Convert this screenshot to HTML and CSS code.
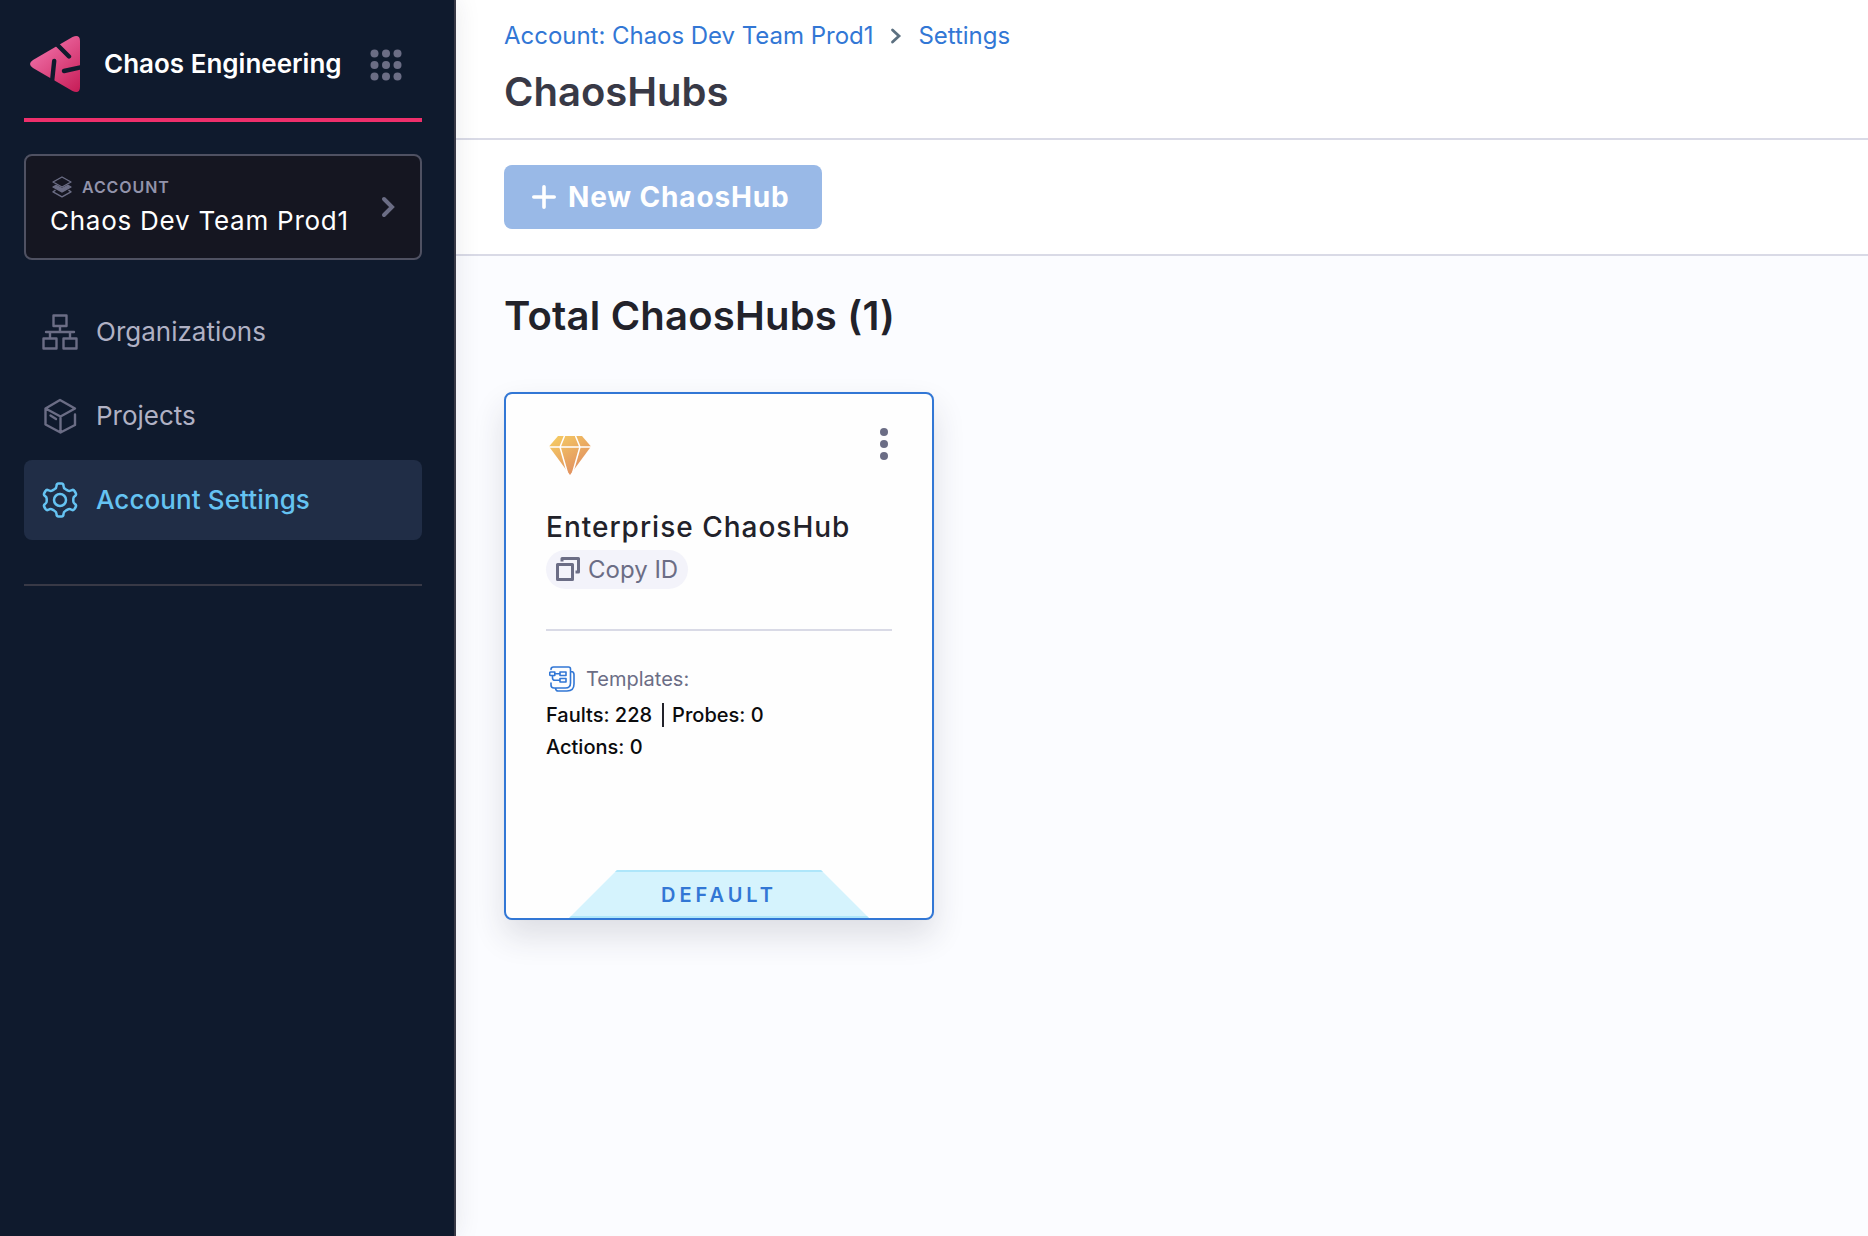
FILE: index.html
```html
<!DOCTYPE html>
<html lang="en">
<head>
<meta charset="utf-8">
<title>ChaosHubs</title>
<link rel="stylesheet" href="styles.css">
</head>
<body>
<div class="app">
  <aside class="sidebar">
    <div class="brand">
      <svg class="brand-logo" viewBox="0 0 50 56" width="50" height="56">
        <defs>
          <linearGradient id="pink" x1="0.2" y1="0.1" x2="0.9" y2="1">
            <stop offset="0" stop-color="#f070a8"/>
            <stop offset="1" stop-color="#c8205a"/>
          </linearGradient>
        </defs>
        <path fill="url(#pink)" d="M3 24 42.500.9Q50-2 50 5V51Q50 58 42.500 55.100L3 32Q-3 28 3 24Z"/>
        <path class="logo-cut" d="M39 20.500 27 8.500M24.200 25 22 46M34 35 52 31"/>
      </svg>
      <span class="brand-name">Chaos Engineering</span>
      <svg class="brand-grid" viewBox="0 0 32 32" width="32" height="32" fill="#6b6d85">
        <circle cx="4.500" cy="4.500" r="4"/><circle cx="16" cy="4.500" r="4"/><circle cx="27.500" cy="4.500" r="4"/>
        <circle cx="4.500" cy="16" r="4"/><circle cx="16" cy="16" r="4"/><circle cx="27.500" cy="16" r="4"/>
        <circle cx="4.500" cy="27.500" r="4"/><circle cx="16" cy="27.500" r="4"/><circle cx="27.500" cy="27.500" r="4"/>
      </svg>
    </div>
    <div class="scope">
      <div class="scope-text">
        <div class="scope-label">
          <svg viewBox="0 0 20 22" width="20" height="22" fill="none" stroke="#6b6d85" stroke-width="1.400" stroke-linejoin="round">
            <path d="M10 1 19 6 10 11 1 6Z"/>
            <path d="M1 11 4 9.300 10 12.600 16 9.300 19 11 10 16Z" fill="#6b6d85"/>
            <path d="M3.500 14.200 1 15.800 10 20.800 19 15.800 16.500 14.200"/>
          </svg>
          <span>ACCOUNT</span>
        </div>
        <div class="scope-name">Chaos Dev Team Prod1</div>
      </div>
      <svg class="scope-arrow" viewBox="0 0 14 22" width="14" height="22"><path d="M3 3 11 11 3 19" fill="none" stroke="#6b6d85" stroke-width="4" stroke-linecap="round"/></svg>
    </div>
    <nav class="nav">
      <a class="nav-item">
        <svg viewBox="0 0 36 36" width="36" height="36" fill="none" stroke="#6b6d85" stroke-width="2.400" stroke-linejoin="round" stroke-linecap="round">
          <path d="M11.500 1.500H24.500V12H11.500ZM1.500 24.500H14.500V34.500H1.500ZM21.500 24.500H34.500V34.500H21.500ZM18 12V18M4 18H32M8 18V24M28 18V24"/>
        </svg>
        <span>Organizations</span>
      </a>
      <a class="nav-item">
        <svg viewBox="0 0 36 36" width="36" height="36" fill="none" stroke="#6b6d85" stroke-width="2.400" stroke-linejoin="round" stroke-linecap="round">
          <path d="M33 16.500V27L18.500 34.500 3.500 26.500V10.500L18 2 33 10.500 18.500 18.500 3.500 10.500M18.500 18.500V34.500M8.500 17.500 14 21"/>
        </svg>
        <span>Projects</span>
      </a>
      <a class="nav-item active">
        <svg viewBox="0 0 36 36" width="36" height="36" fill="none" stroke="#65c3f2" stroke-width="2.500" stroke-linejoin="round">
          <path d="M14.500 4Q14.500 1.500 16.500 1.500H19.500Q21.500 1.500 21.500 4Q21.500 6.300 23.500 7.200L25.500 8.400Q27.500 9.500 29.500 8.300Q31.500 7.200 32.500 9L33.700 11Q34.700 13 32.800 14.100Q31.300 15 31.300 16.800V19.200Q31.300 21 32.800 21.900Q34.700 23 33.700 25L32.500 27Q31.500 28.800 29.500 27.700Q27.500 26.500 25.500 27.600L23.500 28.800Q21.500 29.700 21.500 32Q21.500 34.500 19.500 34.500H16.500Q14.500 34.500 14.500 32Q14.500 29.700 12.500 28.800L10.500 27.600Q8.500 26.500 6.500 27.700Q4.500 28.800 3.500 27L2.300 25Q1.300 23 3.200 21.900Q4.700 21 4.700 19.200V16.800Q4.700 15 3.200 14.100Q1.300 13 2.300 11L3.500 9Q4.500 7.200 6.500 8.300Q8.500 9.500 10.500 8.400L12.500 7.200Q14.500 6.300 14.500 4Z"/>
          <circle cx="18" cy="18" r="6"/>
        </svg>
        <span>Account Settings</span>
      </a>
    </nav>
  </aside>
  <main class="main">
    <header class="page-head">
      <div class="crumbs">
        <a>Account: Chaos Dev Team Prod1</a>
        <svg viewBox="0 0 12 16" width="12" height="16"><path d="M2.500 2 9 8 2.500 14" fill="none" stroke="#5c7080" stroke-width="2.800" stroke-linecap="round"/></svg>
        <a>Settings</a>
      </div>
      <h1 class="page-title">ChaosHubs</h1>
    </header>
    <div class="toolbar">
      <button class="new-btn">
        <svg viewBox="0 0 24 24" width="24" height="24"><path d="M12 1.800V22.200M1.800 12H22.200" stroke="#fff" stroke-width="3.600" stroke-linecap="round"/></svg>
        <span>New ChaosHub</span>
      </button>
    </div>
    <section class="content">
      <h2 class="total">Total ChaosHubs (1)</h2>
      <article class="card">
        <div class="card-top">
          <svg class="gem" viewBox="0 0 42 39" width="42" height="39">
            <defs>
              <linearGradient id="gold" x1="0" y1="0" x2="0.75" y2="1">
                <stop offset="0" stop-color="#f7d063"/>
                <stop offset="1" stop-color="#df8a60"/>
              </linearGradient>
            </defs>
            <path fill="url(#gold)" d="M9 0H33L42 10.500 21 39 0 10.500Z"/>
            <path d="M0 11H42M15.500 0 11 11 19 39M26.500 0 31 11 23 39" fill="none" stroke="#fff" stroke-width="1.500"/>
          </svg>
          <svg class="more" viewBox="0 0 8 32" width="8" height="32" fill="#6b6d85"><circle cx="4" cy="4" r="4"/><circle cx="4" cy="16" r="4"/><circle cx="4" cy="28" r="4"/></svg>
        </div>
        <h3 class="hub-name">Enterprise ChaosHub</h3>
        <div class="copy">
          <svg viewBox="0 0 24 24" width="24" height="24" fill="none" stroke="#6b6d85" stroke-width="3" stroke-linejoin="round"><path d="M1.500 7.500H16.500V22.500H1.500ZM6 4.500V1.500H22.500V15H19.500"/></svg>
          <span>Copy ID</span>
        </div>
        <div class="templates">
          <svg viewBox="0 0 26 26" width="26" height="26" fill="none" stroke="#3277d5" stroke-width="1.600" stroke-linejoin="round" stroke-linecap="round">
            <path d="M2 3.500Q2 1 4.500 1H19.500Q21.500 1 21.500 3V17Q21.500 22 16.500 22H5Q2 22 2 19V17M22 5.500Q25 5.500 25 8.500V18Q25 25 18 25H9Q7 25 6.500 22.500"/>
            <path d="M1.800 6H5.800V9.500H1.800Q.7 9.500.7 8.400V7.100Q.7 6 1.800 6ZM11 6H17V9.500H11ZM11 12.500H17V16H11ZM6 7.700H11M3.500 9.500V12Q3.500 14.300 6 14.300H11"/>
          </svg>
          <span>Templates:</span>
        </div>
        <div class="stats"><span>Faults: 228</span><i class="bar"></i><span>Probes: 0</span></div>
        <div class="stats">Actions: 0</div>
        <div class="ribbon"><span>DEFAULT</span></div>
      </article>
    </section>
  </main>
</div>
</body>
</html>
```
FILE: styles.css
```css
* { box-sizing: border-box; }
body { margin: 0; font-family: Inter, sans-serif; }
h1, h2, h3 { margin: 0; }
svg { display: block; flex: none; }
.app { display: flex; height: 1236px; overflow: hidden; }

.sidebar {
  position: relative;
  z-index: 1;
  flex: none;
  width: 456px;
  padding: 0 32px 0 24px;
  background: #0f1a2d;
  border-right: 2px solid #383946;
  box-shadow: 0 0 24px rgba(40, 41, 61, 0.1);
}
.brand {
  display: flex;
  align-items: center;
  height: 122px;
  padding: 6px 20px 0 6px;
  border-bottom: 4px solid #ee2f6b;
}
.brand-logo { margin-top: 4px; }
.logo-cut { fill: none; stroke: #0f1a2d; stroke-width: 4.4; stroke-linecap: round; }
.brand-name { margin: 2px 0 0 24px; font-size: 26px; font-weight: 600; color: #fff; white-space: nowrap; }
.brand-grid { margin: 6px 0 0 auto; }

.scope {
  display: flex;
  align-items: center;
  height: 106px;
  margin-top: 32px;
  padding: 0 25px 0 24px;
  background: #151621;
  border: 2px solid #4f5162;
  border-radius: 8px;
}
.scope-label { display: flex; align-items: center; gap: 10px; padding-left: 2px; font-size: 16px; font-weight: 600; line-height: 22px; letter-spacing: 0.9px; color: #9293ab; }
.scope-name { margin-top: 5px; font-size: 26px; line-height: 36px; letter-spacing: 0.75px; color: #fff; white-space: nowrap; }
.scope-arrow { margin-left: auto; }

.nav { display: flex; flex-direction: column; gap: 4px; margin-top: 32px; padding-bottom: 44px; border-bottom: 2px solid #383946; }
.nav-item { display: flex; align-items: center; gap: 18px; height: 80px; padding: 0 0 1px 18px; border-radius: 8px; font-size: 26px; line-height: 32px; color: #b0b1c4; white-space: nowrap; }
.nav-item.active { background: #202d46; color: #65c3f2; font-weight: 500; letter-spacing: 0.1px; }

.main { flex: 1; background: #fbfcff; }
.page-head { height: 140px; padding: 20px 48px 0; background: #fff; border-bottom: 2px solid #d9dae6; }
.crumbs { display: flex; align-items: center; gap: 16.5px; font-size: 24px; line-height: 32px; letter-spacing: -0.03px; color: #3277d5; white-space: nowrap; }
.page-title { margin-top: 16px; font-size: 40px; line-height: 48px; font-weight: 600; color: #383946; }
.toolbar { display: flex; align-items: center; height: 116px; padding: 0 48px; background: #fff; border-bottom: 2px solid #d9dae6; }
.new-btn {
  display: flex;
  align-items: center;
  gap: 12px;
  width: 318px;
  height: 64px;
  margin: 0;
  padding: 0 28px;
  background: #99b9e7;
  border: 0;
  border-radius: 8px;
  font: 700 28px/40px Inter, sans-serif;
  letter-spacing: 0.85px;
  color: #fff;
  white-space: nowrap;
}
.content { padding: 36px 48px; }
.total { font-size: 40px; line-height: 48px; font-weight: 600; letter-spacing: 0.2px; color: #22222a; }
.card {
  display: flex;
  flex-direction: column;
  width: 430px;
  height: 528px;
  margin-top: 52px;
  padding: 34px 40px 0;
  background: #fefefe;
  border: 2px solid #3277d5;
  border-radius: 8px;
  box-shadow: 0 16px 32px rgba(40, 41, 61, 0.14), 0 0 2px rgba(40, 41, 61, 0.04);
}
.card-top { display: flex; justify-content: space-between; height: 79px; padding: 0 4px 0 3px; }
.gem { margin-top: 8px; }
.hub-name { font-size: 28px; line-height: 40px; font-weight: 500; letter-spacing: 1px; color: #22222a; white-space: nowrap; }
.copy { display: flex; align-items: center; gap: 8px; width: 142px; height: 39px; margin-top: 3px; padding: 0 0 1px 10px; border-radius: 20px; background: #f3f3fa; font-size: 24px; color: #6b6d85; white-space: nowrap; }
.templates { display: flex; align-items: center; gap: 11px; margin-top: 40px; padding: 32px 0 4px 3px; border-top: 2px solid #d9dae6; font-size: 20px; line-height: 32px; color: #6b6d85; }
.stats { display: flex; align-items: center; font-size: 20px; line-height: 32px; font-weight: 500; color: #0b0b0d; white-space: nowrap; }
.bar { width: 2px; height: 24px; margin: 0 8px 0 10px; background: #22222a; }
.ribbon {
  align-self: center;
  width: 300px;
  height: 48px;
  margin-top: auto;
  border: solid #aee6fa;
  border-width: 2px 0;
  background: #d5f3fd;
  clip-path: polygon(48px 0, 252px 0, 100% 100%, 0 100%);
  font-size: 20px;
  line-height: 46px;
  font-weight: 600;
  letter-spacing: 4px;
  text-align: center;
  color: #3277d5;
}
```
